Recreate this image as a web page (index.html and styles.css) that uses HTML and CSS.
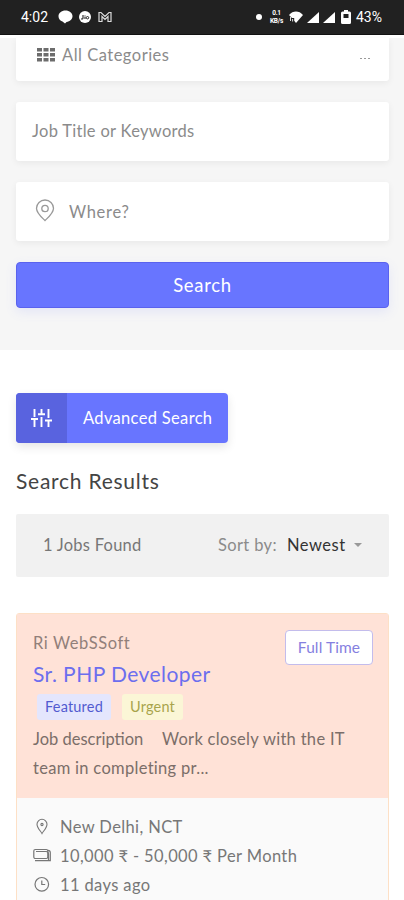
FILE: index.html
```
<!DOCTYPE html>
<html lang="en">
<head>
<meta charset="utf-8">
<meta name="viewport" content="width=device-width, initial-scale=1">
<title>Search Results</title>
<link rel="stylesheet" href="styles.css">
</head>
<body>
<div class="screen">
  <header class="status">
    <div class="status-left">
      <span class="time">4:02</span>
      <svg class="chat" width="15" height="14" viewBox="0 0 15 14"><path fill="#fff" d="M7.500 0.500C3.500 0.500.5 3 .5 6.300c0 2.500 1.500 4.400 4 5.300L7 13.500l1.500-1.600c3.400-.3 6-2.600 6-5.600C14.500 3 11.500.5 7.500.5z"/></svg>
      <svg class="jio" width="12" height="12" viewBox="0 0 12 12"><circle cx="6" cy="6" r="6" fill="#fff"/><path d="M4 4v3c0 1-.8 1.200-2 .8M6 5.500V8M6 4v.5" fill="none" stroke="#222" stroke-width="1.100"/><circle cx="8.500" cy="6.700" r="1.200" fill="none" stroke="#222"/></svg>
      <svg class="gmail" width="14" height="12" viewBox="0 0 14 12"><path d="M1 10.500V1.500h2l4 4 4-4h2v9h-3V5.500l-3 3-3-3v5z" fill="none" stroke="#ddd" stroke-width="1.200"/></svg>
    </div>
    <div class="status-right">
      <i class="dot"></i>
      <span class="net"><b>0.1</b><b>KB/s</b></span>
      <svg class="wifi" width="14" height="12" viewBox="0 0 14 12"><path fill="#fff" d="M0 4C4-.6 10-.6 14 4L7 12 5.200 9.800V7H3L0 4z"/><path d="M1.500 6v4M3.600 8v2.500" stroke="#ddd"/></svg>
      <svg class="signal" width="12" height="11" viewBox="0 0 12 11"><path fill="#fff" d="M12 0v11H0z"/></svg>
      <svg class="signal" width="12" height="11" viewBox="0 0 12 11"><path fill="#fff" d="M12 0v11H0z"/></svg>
      <svg class="battery" width="10" height="14" viewBox="0 0 10 14"><path fill="#fff" fill-rule="evenodd" d="M3 0h4v1.500h1.500Q10 1.500 10 3v9.500Q10 14 8.500 14h-7Q0 14 0 12.500V3Q0 1.500 1.500 1.500H3zM2.500 4v4h5V4z"/></svg>
      <span class="percent">43%</span>
    </div>
  </header>

  <section class="search-panel">
    <div class="field category">
      <svg width="18" height="14" viewBox="0 0 18 14" fill="#6c6c6c"><path d="M0 0h5v3.600H0zM6.500 0h5v3.600h-5zM13 0h5v3.600h-5zM0 5h5v3.600H0zM6.500 5h5v3.600h-5zM13 5h5v3.600h-5zM0 10h5v3.600H0zM6.500 10h5v3.600h-5zM13 10h5v3.600h-5z"/></svg>
      <span class="t-cat">All Categories</span>
      <span class="more"><i></i><i></i><i></i></span>
    </div>
    <div class="field keywords"><span class="t-key">Job Title or Keywords</span></div>
    <div class="field where">
      <svg width="20" height="23" viewBox="0 0 20 23" fill="none" stroke="#999" stroke-width="1.300"><path d="M10 21.500C8 19.500 1.500 14.500 1.500 9.300a8.500 8.300 0 0 1 17 0c0 5.200-6.500 10.200-8.500 12.200z"/><circle cx="10" cy="9.500" r="3.200"/></svg>
      <span class="t-where">Where?</span>
    </div>
    <div class="search-btn"><span>Search</span></div>
  </section>

  <main>
    <div class="advanced">
      <div class="adv-icon"><svg width="21" height="20" viewBox="0 0 21 20" fill="none" stroke="#fff" stroke-width="1.900"><path d="M3.500 1v8M0 11h7M3.500 11v8M10.500 1v5M7 6.300h7M10.500 9v10M17.500 1v9M14 12.500h7M17.500 12.500V19"/></svg></div>
      <span class="t-adv">Advanced Search</span>
    </div>
    <h1><span>Search Results</span></h1>
    <div class="sortbar">
      <span class="t-found">1 Jobs Found</span>
      <span class="t-sort">Sort by:</span>
      <span class="t-new">Newest</span>
      <svg width="8" height="4" viewBox="0 0 8 4"><path d="M0 0h8L4 4z" fill="#999"/></svg>
    </div>
    <article class="job">
      <div class="job-head">
        <div class="type"><span>Full Time</span></div>
        <div class="company"><span>Ri WebSSoft</span></div>
        <h2><span>Sr. PHP Developer</span></h2>
        <div class="tags"><span class="tag featured"><span>Featured</span></span><span class="tag urgent"><span>Urgent</span></span></div>
        <div class="desc"><span class="d1">Job description</span><span class="d2">Work closely with the IT</span></div>
        <div class="desc"><span class="d3">team in completing pr...</span></div>
      </div>
      <div class="job-foot">
        <div class="meta"><svg width="18" height="17" viewBox="0 0 18 17" fill="none" stroke="#777" stroke-width="1.100"><path d="M9 15.500C8 13.500 4 10 4 6.300a5 5 0 0 1 10 0C14 10 10 13.500 9 15.500z"/><circle cx="9" cy="6.500" r="1.100"/></svg><span class="m1">New Delhi, NCT</span></div>
        <div class="meta"><svg width="18" height="17" viewBox="0 0 18 17" fill="none" stroke="#777" stroke-width="1.200"><rect x=".8" y="2.500" width="14" height="9" rx="1.500"/><path d="M3 4.500h10c2 0 2.500.5 2.500 2.500v7M2 13.700h15.300V5.500c0-1-.6-2-2.300-2.200"/></svg><span class="m2">10,000 ₹ - 50,000 ₹ Per Month</span></div>
        <div class="meta"><svg width="18" height="17" viewBox="0 0 18 17" fill="none" stroke="#777" stroke-width="1.200"><circle cx="8.800" cy="8.300" r="6.800"/><path d="M8.800 4.500v4h3.400"/></svg><span class="m3">11 days ago</span></div>
      </div>
    </article>
  </main>
</div>
</body>
</html>
```
FILE: styles.css
```
* { box-sizing: border-box; margin: 0; padding: 0; }
body { background: #fff; color: #777; font: 400 16.5px/24px Lato, "Open Sans", sans-serif; }
svg { display: block; flex: none; }
span { white-space: nowrap; }
.screen { width: 404px; height: 900px; overflow: hidden; }

.status { height: 35px; background: #212121; border-bottom: 1px solid #111; color: #fff; display: flex; justify-content: space-between; padding: 0 20px 0 21px; font: 400 14px/36px Roboto, sans-serif; }
.status-left, .status-right { display: flex; align-items: center; }
.time { width: 37px; }
.jio { margin-left: 6px; }
.gmail { margin-left: 7px; }
.dot { width: 6px; height: 6px; border-radius: 50%; background: #fff; margin-right: 7px; }
.net { display: flex; flex-direction: column; align-items: center; width: 15px; font-size: 6.5px; line-height: 8px; letter-spacing: -.2px; }
.wifi { margin-left: 5px; }
.signal { margin-left: 4px; }
.battery { margin-left: 6px; margin-right: 5px; }
.percent { width: 28px; }

.search-panel { height: 315px; background: #f6f6f6; border-top: 3px solid #fff; padding: 0 15px 0 16px; }
.field { background: #fff; border-radius: 3px; box-shadow: 0 2px 7px rgba(0,0,0,.06); display: flex; align-items: center; height: 59px; color: #8b8b8b; }
.category { height: 43px; border-radius: 0 0 3px 3px; margin-bottom: 21px; padding: 0 19px 10px 21px; }
.t-cat { margin-left: 7px; flex: 1; letter-spacing: .5px; }
.t-key { letter-spacing: .3px; }
.t-where { letter-spacing: .7px; }
.more { display: flex; gap: 2px; padding-top: 8px; }
.more i { width: 2px; height: 1px; background: #999; }
.keywords { margin-bottom: 21px; padding: 0 0 1px 16px; }
.where { padding-left: 19px; margin-bottom: 21px; }
.where svg { margin: 0 14px 2px 0; }
.search-btn { height: 46px; border-radius: 4px; background: #6875ff; border: 1px solid #5a62ee; color: #fff; display: flex; align-items: center; justify-content: center; font-size: 18.5px; letter-spacing: .7px; box-shadow: 0 4px 12px rgba(102,118,255,.12); }

main { padding: 43px 15px 0 16px; }
.advanced { width: 212px; height: 50px; border-radius: 4px; background: #6875ff; color: #fff; display: flex; align-items: center; overflow: hidden; box-shadow: 0 4px 10px rgba(0,0,0,.1); }
.adv-icon { width: 51px; height: 50px; background: #5963df; display: flex; align-items: center; justify-content: center; margin-right: 16px; }
.t-adv { letter-spacing: .33px; }
h1 { font-size: 21px; line-height: 30px; font-weight: 400; color: #444; margin-top: 23px; letter-spacing: .75px; }
.sortbar { height: 63px; margin-top: 18px; background: #f1f1f1; border-radius: 2px; display: flex; align-items: center; padding: 0 27px 2px; }
.t-found { flex: 1; letter-spacing: .25px; }
.t-sort { color: #8b8b8b; width: 69px; letter-spacing: .35px; }
.t-new { color: #333; width: 67px; letter-spacing: .5px; }

.job { margin-top: 36px; border: 1px solid #fde0c6; border-radius: 3px 3px 0 0; height: 320px; }
.job-head { position: relative; height: 184px; background: #ffe2d7; padding: 17px 16px 0; }
.type { position: absolute; right: 15px; top: 16px; width: 88px; height: 35px; background: #fff; border: 1px solid #c3bcec; border-radius: 4px; color: #8580df; display: flex; align-items: center; justify-content: center; font-size: 15.5px; letter-spacing: .1px; padding-bottom: 2px; }
.company { height: 26px; color: #917f7a; letter-spacing: .6px; }
h2 { font-size: 21px; line-height: 33px; font-weight: 400; color: #6c6eee; letter-spacing: .45px; }
.tags { display: flex; gap: 11px; padding: 4px 0 0 4px; height: 35px; }
.tag { height: 26px; border-radius: 3px; display: flex; align-items: center; justify-content: center; font-size: 14.5px; letter-spacing: .2px; }
.featured { width: 74px; background: #e4e6fd; color: #525bd0; }
.urgent { width: 61px; background: #fbf6d6; color: #a8a44c; }
.desc { display: flex; height: 29px; line-height: 29px; color: #7b6e69; }
.d1 { width: 129px; }
.d2, .d3 { letter-spacing: .3px; }
.job-foot { background: #fafafa; padding: 14px 16px 0; height: 134px; }
.meta { display: flex; align-items: center; height: 29px; }
.meta span { margin-left: 9px; letter-spacing: .38px; }
```
